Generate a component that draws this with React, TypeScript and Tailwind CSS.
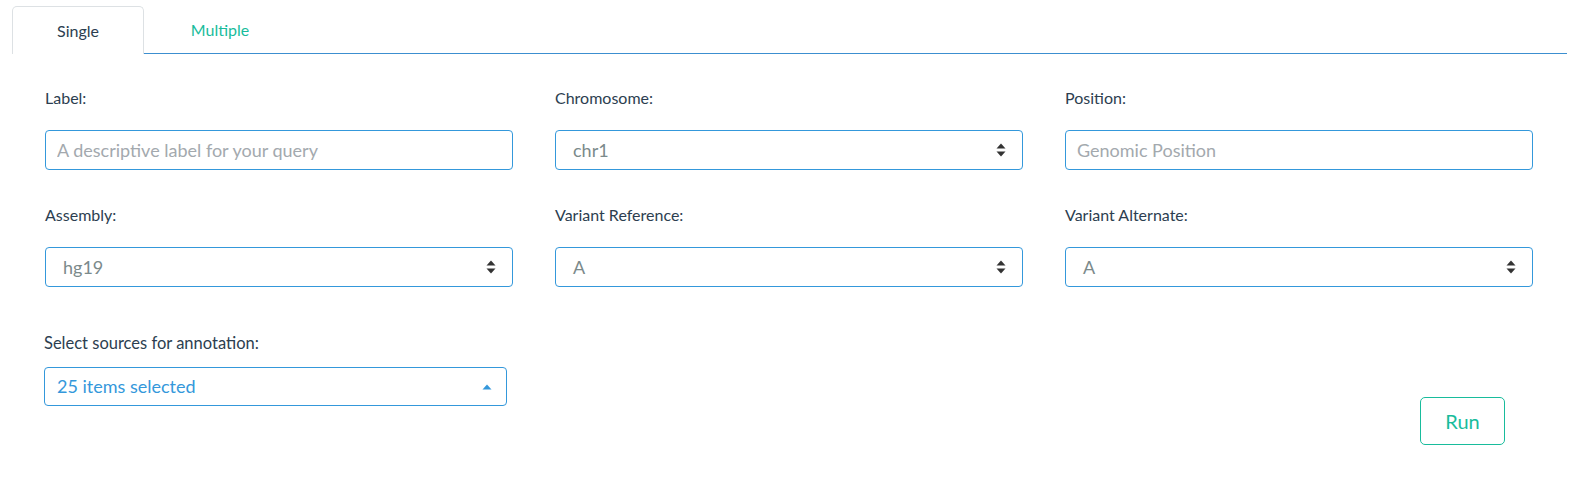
import React from "react";

const font = { fontFamily: "Lato, 'Open Sans', sans-serif" };

function UpDown() {
  return (
    <svg width="10" height="14" viewBox="0 0 10 14" className="shrink-0">
      <path d="M5 0.5 L9.5 5.5 H0.5 Z" fill="#333" />
      <path d="M5 13.5 L9.5 8.5 H0.5 Z" fill="#333" />
    </svg>
  );
}

function Field({ label, children }: { label: string; children: React.ReactNode }) {
  return (
    <div className="flex flex-col">
      <label className="text-[16px] leading-[20px] text-[#2c3e50] h-[20px]">{label}</label>
      <div className="mt-[22px]">{children}</div>
    </div>
  );
}

function TextInput({ placeholder }: { placeholder: string }) {
  return (
    <input
      placeholder={placeholder}
      className="w-full h-[40px] rounded-[4px] border border-[#3498db] px-[11px] text-[18px] text-[#555] placeholder:text-[#a3a9ae] outline-none"
      style={font}
    />
  );
}

function SelectBox({ value }: { value: string }) {
  return (
    <div className="w-full h-[40px] rounded-[4px] border border-[#3498db] pl-[17px] pr-[16px] flex items-center justify-between">
      <span className="text-[18px] text-[#7b8a8b]">{value}</span>
      <UpDown />
    </div>
  );
}

export default function App() {
  return (
    <div className="w-[1585px] h-[478px] bg-white" style={font}>
      {/* tabs */}
      <div className="pt-[6px] pl-[12px] pr-[18px]">
        <div className="flex items-end border-b border-[#3c8fd0]">
          <div className="w-[132px] h-[48px] -mb-px bg-white border border-b-0 border-[#dde1e4] rounded-t-[5px] flex items-center justify-center text-[16px] text-[#2c3e50]">
            Single
          </div>
          <div className="w-[152px] h-[47px] flex items-center justify-center text-[16px] text-[#18bc9c]">
            Multiple
          </div>
        </div>
      </div>

      <div className="pl-[45px] pt-[34px]">
        <div className="grid grid-cols-[468px_468px_468px] gap-x-[42px] gap-y-[35px]">
          <Field label="Label:">
            <TextInput placeholder="A descriptive label for your query" />
          </Field>
          <Field label="Chromosome:">
            <SelectBox value="chr1" />
          </Field>
          <Field label="Position:">
            <TextInput placeholder="Genomic Position" />
          </Field>
          <Field label="Assembly:">
            <SelectBox value="hg19" />
          </Field>
          <Field label="Variant Reference:">
            <SelectBox value="A" />
          </Field>
          <Field label="Variant Alternate:">
            <SelectBox value="A" />
          </Field>
        </div>

        <div className="flex mt-[46px]">
          <div className="-ml-px w-[463px] flex flex-col">
            <label className="text-[16.5px] leading-[20px] text-[#2c3e50]">Select sources for annotation:</label>
            <div className="mt-[14px] h-[39px] rounded-[4px] border border-[#3498db] pl-[12px] pr-[14px] flex items-center justify-between">
              <span className="text-[18px] text-[#3498db]">25 items selected</span>
              <svg width="10" height="6" viewBox="0 0 10 6">
                <path d="M5 0.5 L9.5 5.5 H0.5 Z" fill="#3498db" />
              </svg>
            </div>
          </div>
          <div className="flex-1 flex justify-end items-start pr-[80px] pt-[64px]">
            <button className="w-[85px] h-[48px] rounded-[5px] border border-[#18bc9c] text-[20px] text-[#18bc9c] bg-white">
              Run
            </button>
          </div>
        </div>
      </div>
    </div>
  );
}
